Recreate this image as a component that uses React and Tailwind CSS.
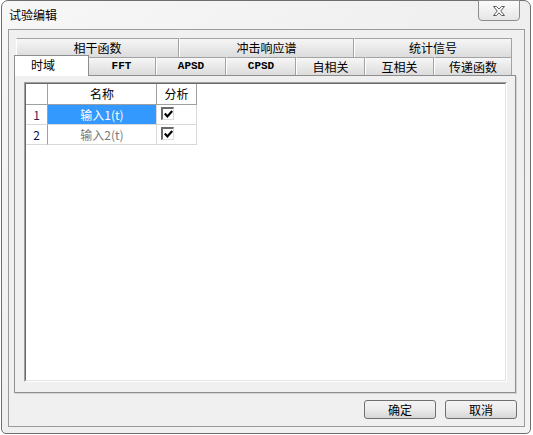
import React from "react";

const row1 = [
  { label: "相干函数", w: "w-[163px]" },
  { label: "冲击响应谱", w: "w-[175px]" },
  { label: "统计信号", w: "w-[158px]" },
];

const row2 = [
  { label: "FFT", w: "w-[69px]", mono: true },
  { label: "APSD", w: "w-[70px]", mono: true },
  { label: "CPSD", w: "w-[70px]", mono: true },
  { label: "自相关", w: "w-[69px]" },
  { label: "互相关", w: "w-[69px]" },
  { label: "传递函数", w: "w-[78px]" },
];

function Tab({ label, w, mono }) {
  return (
    <div
      className={`${w} h-full flex items-center justify-center border-t border-r border-l border-t-[#a3a3a3] border-r-[#a3a3a3] border-l-white bg-gradient-to-b from-[#f6f6f6] to-[#dcdcdc] text-black ${
        mono
          ? "font-['Liberation_Mono',monospace] font-bold text-[11px]"
          : "font-['Noto_Sans_CJK_SC',sans-serif] text-[12px]"
      }`}
    >
      <span className="leading-none">{label}</span>
    </div>
  );
}

function Check() {
  return (
    <div className="w-[13px] h-[13px] bg-white border-t-2 border-l-2 border-b border-r border-t-[#6a6a6a] border-l-[#6a6a6a] border-b-[#dcdcdc] border-r-[#dcdcdc] flex items-center justify-center">
      <svg width="9" height="8" viewBox="0 0 9 8">
        <path d="M0.8 3.6 L3.4 6.4 L8.2 1" fill="none" stroke="#000" strokeWidth="2.2" />
      </svg>
    </div>
  );
}

export default function App() {
  return (
    <div className="w-[533px] h-[435px] bg-white font-['Noto_Sans_CJK_SC',sans-serif]">
      <div className="ml-[1px] w-[530px] h-[434px] rounded-t-[7px] rounded-b-[5px] border border-[#6e6e6e] bg-gradient-to-br from-[#f7f7f7] via-[#efefef] to-[#f3f3f3] flex flex-col">
        {/* title bar */}
        <div className="h-[28px] flex items-start shrink-0">
          <div className="pl-[7px] pt-[7px] text-[12px] leading-[14px] text-black">试验编辑</div>
          <div className="ml-auto mr-[10px] -mt-px w-[42px] h-[21px] rounded-b-[4px] border border-[#8c8c8c] bg-gradient-to-b from-[#fbfbfb] to-[#e6e6e6] flex items-center justify-center">
            <svg width="12" height="10" viewBox="0 0 12 10">
              <path
                d="M0.5 0.5 H3.5 L6 3.2 L8.5 0.5 H11.5 L7.7 5 L11.5 9.5 H8.5 L6 6.8 L3.5 9.5 H0.5 L4.3 5 Z"
                fill="#fff"
                stroke="#5a5a5a"
                strokeWidth="1"
              />
            </svg>
          </div>
        </div>

        {/* client area */}
        <div className="ml-[6px] w-[517px] h-[398px] border border-[#9a9a9a] bg-[#f0f0f0] flex flex-col">
          <div className="ml-[5px] mt-[8px] w-[502px] flex flex-col">
            {/* tabs */}
            <div className="h-[37px] flex flex-col">
              <div className="h-[19px] flex pl-[2px]">
                {row1.map((t) => (
                  <Tab key={t.label} {...t} />
                ))}
              </div>
              <div className="h-[18px] flex items-start pl-[2px]">
                <div className="relative z-10 -ml-[2px] -mr-[2px] -mt-[2px] w-[75px] h-[21px] bg-white border-t border-l border-r border-[#8e8e8e] flex items-center pl-[16px] text-[12px] text-black">
                  <span className="leading-none -mt-[2px]">时域</span>
                </div>
                {row2.map((t) => (
                  <Tab key={t.label} {...t} />
                ))}
              </div>
            </div>
            {/* pane */}
            <div className="w-[502px] h-[318px] border border-[#8e8e8e] bg-[#f0f0f0] shadow-[1px_1px_0_#d4d4d4] flex">
              <div className="ml-[9px] mt-[6px] w-[483px] h-[300px] border border-t-[#a0a0a0] border-l-[#a0a0a0] border-b-white border-r-white">
                <div className="w-full h-full border border-t-[#696969] border-l-[#696969] border-b-[#e3e3e3] border-r-[#e3e3e3] bg-white">
                  {/* grid */}
                  <div className="flex flex-col text-[12px]">
                    <div className="flex h-[21px]">
                      <div className="w-[22px] border-r border-b border-[#a0a0a0]" />
                      <div className="w-[109px] border-r border-b border-[#a0a0a0] flex items-center justify-center text-black">
                        名称
                      </div>
                      <div className="w-[40px] border-r border-b border-[#a0a0a0] flex items-center justify-center text-black">
                        分析
                      </div>
                    </div>
                    <div className="flex h-[20px]">
                      <div className="w-[22px] border-r border-b border-r-[#a0a0a0] border-b-[#d8d8d8] flex items-center justify-center text-[#3a1a5a]">
                        1
                      </div>
                      <div className="w-[109px] border-r border-b border-[#d8d8d8] bg-[#3399ff] flex items-center justify-center text-white">
                        输入1(t)
                      </div>
                      <div className="w-[40px] border-r border-b border-[#d8d8d8] pl-[4px] pt-[2px]">
                        <Check />
                      </div>
                    </div>
                    <div className="flex h-[20px]">
                      <div className="w-[22px] border-r border-b border-r-[#a0a0a0] border-b-[#d8d8d8] flex items-center justify-center text-[#101050]">
                        2
                      </div>
                      <div className="w-[109px] border-r border-b border-[#d8d8d8] flex items-center justify-center text-[#7a7a7a]">
                        输入2(t)
                      </div>
                      <div className="w-[40px] border-r border-b border-[#d8d8d8] pl-[4px] pt-[2px]">
                        <Check />
                      </div>
                    </div>
                  </div>
                </div>
              </div>
            </div>
          </div>

          {/* buttons */}
          <div className="mt-[7px] flex justify-end gap-[9px] pr-[7px]">
            <button className="w-[72px] h-[19px] rounded-[3px] border border-[#707070] bg-gradient-to-b from-[#f3f3f3] via-[#ebebeb] to-[#d6d6d6] text-[12px] leading-none text-black flex items-center justify-center">
              确定
            </button>
            <button className="w-[72px] h-[19px] rounded-[3px] border border-[#707070] bg-gradient-to-b from-[#f3f3f3] via-[#ebebeb] to-[#d6d6d6] text-[12px] leading-none text-black flex items-center justify-center">
              取消
            </button>
          </div>
        </div>
      </div>
    </div>
  );
}
